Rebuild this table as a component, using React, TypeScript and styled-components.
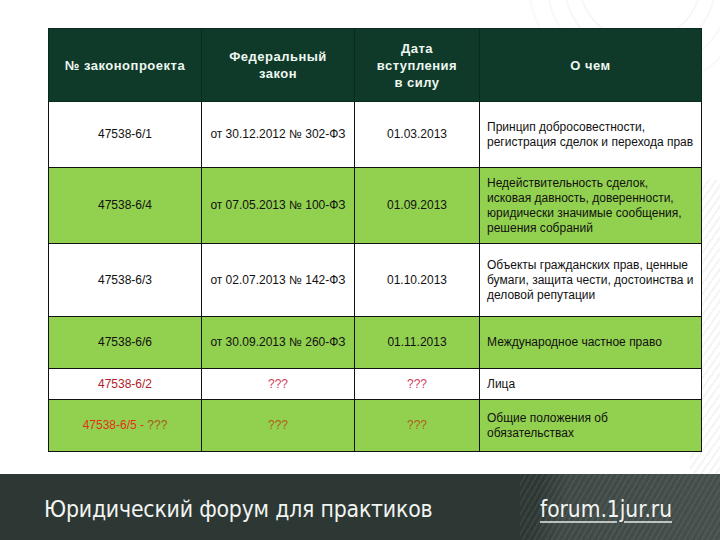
import { FC } from 'react';
import styled, { createGlobalStyle } from 'styled-components';

const GlobalStyle = createGlobalStyle`
  html, body { margin: 0; padding: 0; }
  body {
    width: 720px;
    height: 540px;
    overflow: hidden;
    background: #fff;
    font-family: 'Liberation Sans', Arial, sans-serif;
  }
`;

const Page = styled.div`
  position: relative;
  width: 720px;
  height: 540px;
  display: flex;
  flex-direction: column;
  background:
    radial-gradient(circle at 640px -20px, transparent 0 60px, rgba(200, 185, 185, 0.18) 61px, transparent 63px, transparent 75px, rgba(200, 185, 185, 0.16) 76px, transparent 78px, transparent 92px, rgba(200, 185, 185, 0.14) 93px, transparent 95px, transparent 110px, rgba(200, 185, 185, 0.12) 111px, transparent 113px),
    repeating-linear-gradient(-55deg, rgba(150, 150, 160, 0.1) 0 2px, transparent 2px 6px) 690px 180px / 30px 300px no-repeat,
    #fff;
`;

const Main = styled.main`
  flex: 1;
  padding: 28px 0 0 48px;
`;

const Table = styled.table`
  border-collapse: collapse;
  table-layout: fixed;
  width: 653px;
  font-size: 12px;
  color: #111;
`;

const Col = styled.col<{ $w: number }>`
  width: ${({ $w }) => $w}px;
`;

const HeadCell = styled.th`
  height: 72px;
  padding: 0 4px;
  background: #0f3a2a;
  border: 1px solid #0a2a1e;
  color: #eef7f0;
  font-size: 13px;
  font-weight: bold;
  line-height: 17px;
  letter-spacing: 0.5px;
  text-align: center;
  vertical-align: middle;
`;

const Row = styled.tr<{ $green?: boolean; $h: number }>`
  height: ${({ $h }) => $h}px;
  background: ${({ $green }) => ($green ? '#92d050' : '#fff')};
`;

const Cell = styled.td<{ $left?: boolean; $color?: string }>`
  border: 1px solid #111;
  padding: ${({ $left }) => ($left ? '0 2px 0 7px' : '0 2px')};
  text-align: ${({ $left }) => ($left ? 'left' : 'center')};
  vertical-align: middle;
  line-height: 15px;
  color: ${({ $color }) => $color || '#111'};
  letter-spacing: 0;
  white-space: nowrap;
`;

const Mark = styled.span<{ $color: string }>`
  color: ${({ $color }) => $color};
`;

const Footer = styled.footer`
  height: 66px;
  display: flex;
  align-items: center;
  justify-content: space-between;
  padding: 0 48px 0 44px;
  background:
    repeating-linear-gradient(-60deg, rgba(255, 255, 255, 0.06) 0 2px, transparent 2px 5px) 520px 0 / 200px 66px no-repeat,
    linear-gradient(100deg, #2d3834 0 74%, #3e4946 78%, #454f4c 100%);
  color: #f2f4f2;
  font-family: 'DejaVu Sans Condensed', 'DejaVu Sans', sans-serif;
`;

const Slogan = styled.span`
  font-size: 22.8px;
  letter-spacing: -0.2px;
  padding-top: 4px;
`;

const Site = styled.span`
  font-size: 22.5px;
  padding-top: 4px;
  text-decoration: underline;
  text-underline-offset: 4px;
  text-decoration-thickness: 2px;
  text-decoration-color: rgba(230, 235, 230, 0.75);
`;

type BillRow = {
  bill: React.ReactNode;
  law: string;
  date: string;
  about: React.ReactNode;
  green?: boolean;
  h: number;
  billColor?: string;
  lawColor?: string;
};

const rows: BillRow[] = [
  {
    bill: '47538-6/1',
    law: 'от 30.12.2012 № 302-ФЗ',
    date: '01.03.2013',
    about: <>Принцип добросовестности,<br />регистрация сделок и перехода прав</>,
    h: 66
  },
  {
    bill: '47538-6/4',
    law: 'от 07.05.2013 № 100-ФЗ',
    date: '01.09.2013',
    about: <>Недействительность сделок,<br />исковая давность, доверенности,<br />юридически значимые сообщения,<br />решения собраний</>,
    green: true,
    h: 76
  },
  {
    bill: '47538-6/3',
    law: 'от 02.07.2013 № 142-ФЗ',
    date: '01.10.2013',
    about: <>Объекты гражданских прав, ценные<br />бумаги, защита чести, достоинства и<br />деловой репутации</>,
    h: 73
  },
  {
    bill: '47538-6/6',
    law: 'от 30.09.2013 № 260-ФЗ',
    date: '01.11.2013',
    about: 'Международное частное право',
    green: true,
    h: 52
  },
  {
    bill: '47538-6/2',
    law: '???',
    date: '???',
    about: 'Лица',
    h: 31,
    billColor: '#b3202c',
    lawColor: '#d0405a'
  },
  {
    bill: <>47538-6/5 - <Mark $color="#a8581a">???</Mark></>,
    law: '???',
    date: '???',
    about: <>Общие положения об<br />обязательствах</>,
    green: true,
    h: 52,
    billColor: '#e0321a',
    lawColor: '#b0601c'
  }
];

const App: FC = () => (
  <Page>
    <GlobalStyle />
    <Main>
      <Table>
        <colgroup>
          <Col $w={153} />
          <Col $w={153} />
          <Col $w={125} />
          <Col $w={222} />
        </colgroup>
        <thead>
          <tr>
            <HeadCell>№ законопроекта</HeadCell>
            <HeadCell>Федеральный<br />закон</HeadCell>
            <HeadCell>Дата<br />вступления<br />в силу</HeadCell>
            <HeadCell>О чем</HeadCell>
          </tr>
        </thead>
        <tbody>
          {rows.map(({ bill, law, date, about, green, h, billColor, lawColor }) => (
            <Row key={date + law + h} $green={green} $h={h}>
              <Cell $color={billColor}>{bill}</Cell>
              <Cell $color={lawColor}>{law}</Cell>
              <Cell $color={lawColor}>{date}</Cell>
              <Cell $left>{about}</Cell>
            </Row>
          ))}
        </tbody>
      </Table>
    </Main>
    <Footer>
      <Slogan>Юридический форум для практиков</Slogan>
      <Site>forum.1jur.ru</Site>
    </Footer>
  </Page>
);

export default App;
